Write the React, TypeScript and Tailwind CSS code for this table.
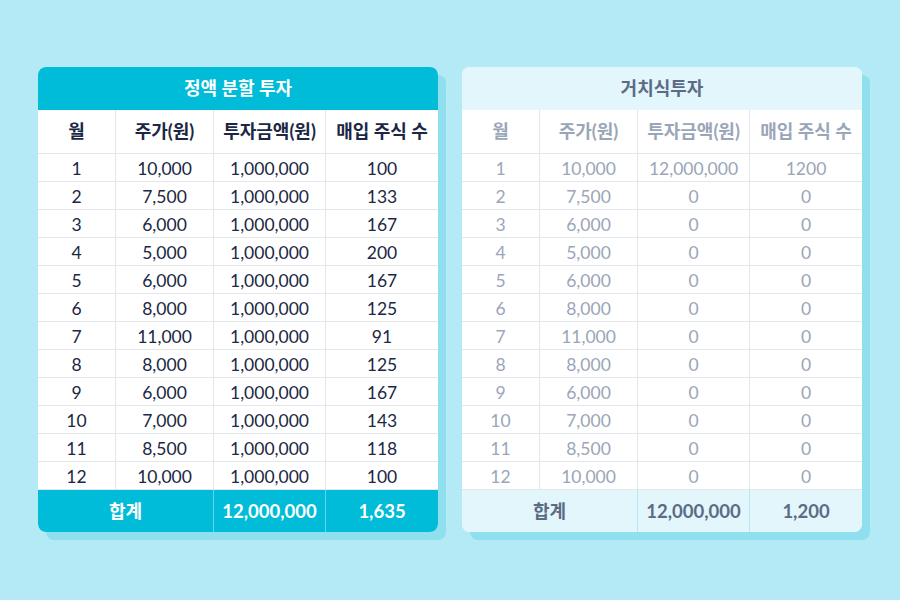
import React from "react";

const prices = ["10,000","7,500","6,000","5,000","6,000","8,000","11,000","8,000","6,000","7,000","8,500","10,000"];
const shares = ["100","133","167","200","167","125","91","125","167","143","118","100"];

const font = { fontFamily: "Lato, 'Noto Sans CJK KR', sans-serif" };

function Table({ variant }: { variant: "a" | "b" }) {
  const a = variant === "a";
  const rowText = a ? "text-[#1b2744]" : "text-[#9aa6b8]";
  const grid = "grid grid-cols-[78px_98px_112px_112px]";
  return (
    <div
      className="w-[400px] rounded-lg overflow-hidden bg-white shadow-[8px_8px_0_0_#8fdfee]"
      style={font}
    >
      <div
        className={`h-[43px] flex items-center justify-center font-bold text-[18px] ${
          a ? "bg-[#00bcd9] text-white" : "bg-[#e3f6fb] text-[#5b6b85]"
        }`}
      >
        {a ? "정액 분할 투자" : "거치식투자"}
      </div>
      <div className={`${grid} h-[44px] border-b border-[#e3e6ea] font-bold text-[18px] ${a ? "text-[#1b2744]" : "text-[#9aa6b8]"}`}>
        {["월", "주가(원)", "투자금액(원)", "매입 주식 수"].map((h, i) => (
          <div key={h} className={`flex items-center justify-center whitespace-nowrap ${i < 3 ? "border-r border-[#e3e6ea]" : ""}`}>
            {h}
          </div>
        ))}
      </div>
      {prices.map((p, r) => {
        const cells = [
          String(r + 1),
          p,
          a ? "1,000,000" : r === 0 ? "12,000,000" : "0",
          a ? shares[r] : r === 0 ? "1200" : "0",
        ];
        return (
          <div key={r} className={`${grid} h-[28px] border-b border-[#e3e6ea] text-[17.5px] ${rowText}`}>
            {cells.map((c, i) => (
              <div key={i} className={`flex items-center justify-center pt-[2px] ${i < 3 ? "border-r border-[#e3e6ea]" : ""}`}>
                {c}
              </div>
            ))}
          </div>
        );
      })}
      <div
        className={`grid grid-cols-[176px_112px_112px] h-[42px] font-bold ${
          a ? "bg-[#00bcd9] text-white" : "bg-[#e3f6fb] text-[#5b6b85]"
        }`}
      >
        <div className={`flex items-center justify-center text-[18px] border-r ${a ? "border-[#5fd4e8]" : "border-[#b3e8f3]"}`}>합계</div>
        <div className={`flex items-center justify-center text-[18.5px] pt-[2px] border-r ${a ? "border-[#5fd4e8]" : "border-[#b3e8f3]"}`}>12,000,000</div>
        <div className="flex items-center justify-center text-[18.5px] pt-[2px]">{a ? "1,635" : "1,200"}</div>
      </div>
    </div>
  );
}

export default function App() {
  return (
    <div className="w-[900px] h-[600px] bg-[#b3eaf5] flex justify-center gap-[24px] pt-[67px]">
      <div>
        <Table variant="a" />
      </div>
      <div>
        <Table variant="b" />
      </div>
    </div>
  );
}
